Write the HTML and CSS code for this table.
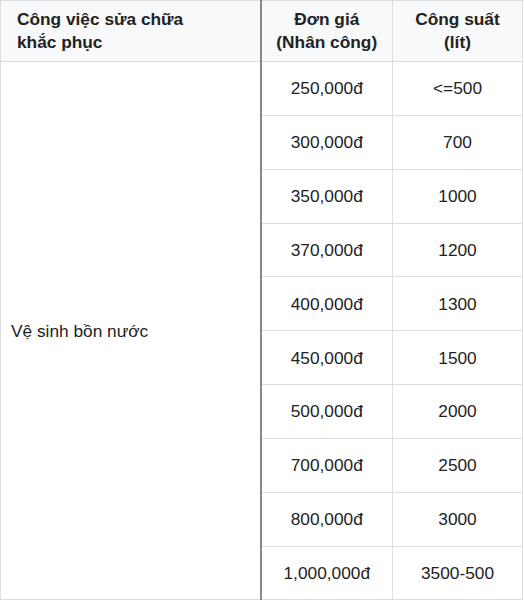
FILE: index.html
```html
<!DOCTYPE html>
<html lang="vi">
<head>
<meta charset="utf-8">
<link rel="stylesheet" href="styles.css">
</head>
<body>
<table class="price">
  <colgroup>
    <col class="c1"><col class="c2"><col class="c3">
  </colgroup>
  <thead>
    <tr>
      <th class="left">Công việc sửa chữa<br>khắc phục</th>
      <th class="sep">Đơn giá<br>(Nhân công)</th>
      <th>Công suất<br>(lít)</th>
    </tr>
  </thead>
  <tbody>
    <tr><td class="left" rowspan="10">Vệ sinh bồn nước</td><td class="sep">250,000đ</td><td>&lt;=500</td></tr>
    <tr><td class="sep">300,000đ</td><td>700</td></tr>
    <tr><td class="sep">350,000đ</td><td>1000</td></tr>
    <tr><td class="sep">370,000đ</td><td>1200</td></tr>
    <tr><td class="sep">400,000đ</td><td>1300</td></tr>
    <tr><td class="sep">450,000đ</td><td>1500</td></tr>
    <tr><td class="sep">500,000đ</td><td>2000</td></tr>
    <tr><td class="sep">700,000đ</td><td>2500</td></tr>
    <tr><td class="sep">800,000đ</td><td>3000</td></tr>
    <tr><td class="sep">1,000,000đ</td><td>3500-500</td></tr>
  </tbody>
</table>
</body>
</html>
```
FILE: styles.css
```css
html, body {
  margin: 0;
  padding: 0;
  background: #fff;
}
.price {
  border-collapse: collapse;
  width: 522px;
  table-layout: fixed;
  font-family: "Liberation Sans", Arial, sans-serif;
  font-size: 17.3px;
  color: #222;
}
.c1 { width: 260px; }
.c2 { width: 132px; }
.c3 { width: 130px; }
.price th, .price td {
  border: 1px solid #ddd;
  text-align: center;
  vertical-align: middle;
}
.price th {
  background: #f8f9fa;
  font-weight: bold;
  height: 60px;
  line-height: 23px;
  padding: 0 6px;
}
.price td {
  height: 52.85px;
  line-height: 22px;
  padding: 0 6px;
}
.price th.left {
  text-align: left;
  padding-left: 16px;
}
.price td.left {
  text-align: left;
  padding-left: 10px;
}
.price .sep {
  border-left: 2px solid #888;
}
```
